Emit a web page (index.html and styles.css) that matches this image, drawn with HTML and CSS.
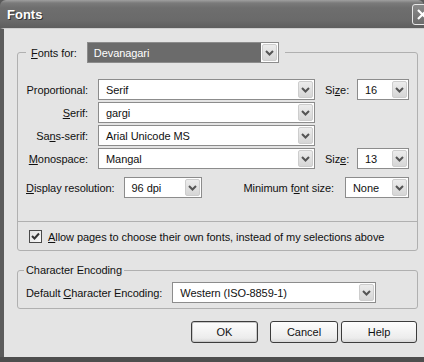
FILE: index.html
```html
<!DOCTYPE html>
<html lang="en">
<head>
    <meta charset="UTF-8">
    <title>Fonts</title>
    <link rel="stylesheet" href="styles.css">
</head>
<body>
    <div class="window">
        <div class="titlebar">
            <span class="title">Fonts</span>
            <span class="close">
                <svg width="13" height="13" viewBox="0 0 13 13"><path d="M2 2 L11 11 M11 2 L2 11" stroke="#fff" stroke-width="2.2" fill="none"/></svg>
            </span>
        </div>

        <div class="client">
            <fieldset class="group group-fonts">
                <legend class="legend-combo">
                    <span class="label"><u>F</u>onts for:</span>
                    <div class="combo combo-lang">
                        <span class="combo-value selected">Devanagari</span>
                        <span class="arrow"><svg width="9" height="6" viewBox="0 0 9 6"><path d="M1 1 L4.5 4.5 L8 1" stroke="#555" stroke-width="2" fill="none"/></svg></span>
                    </div>
                </legend>

                <div class="font-grid">
                    <span class="label right">Proportional:</span>
                    <div class="combo">
                        <span class="combo-value">Serif</span>
                        <span class="arrow"><svg width="9" height="6" viewBox="0 0 9 6"><path d="M1 1 L4.5 4.5 L8 1" stroke="#555" stroke-width="2" fill="none"/></svg></span>
                    </div>
                    <span class="label">Si<u>z</u>e:</span>
                    <div class="combo">
                        <span class="combo-value">16</span>
                        <span class="arrow"><svg width="9" height="6" viewBox="0 0 9 6"><path d="M1 1 L4.5 4.5 L8 1" stroke="#555" stroke-width="2" fill="none"/></svg></span>
                    </div>

                    <span class="label right"><u>S</u>erif:</span>
                    <div class="combo">
                        <span class="combo-value">gargi</span>
                        <span class="arrow"><svg width="9" height="6" viewBox="0 0 9 6"><path d="M1 1 L4.5 4.5 L8 1" stroke="#555" stroke-width="2" fill="none"/></svg></span>
                    </div>
                    <span></span>
                    <span></span>

                    <span class="label right">Sa<u>n</u>s-serif:</span>
                    <div class="combo">
                        <span class="combo-value">Arial Unicode MS</span>
                        <span class="arrow"><svg width="9" height="6" viewBox="0 0 9 6"><path d="M1 1 L4.5 4.5 L8 1" stroke="#555" stroke-width="2" fill="none"/></svg></span>
                    </div>
                    <span></span>
                    <span></span>

                    <span class="label right"><u>M</u>onospace:</span>
                    <div class="combo">
                        <span class="combo-value">Mangal</span>
                        <span class="arrow"><svg width="9" height="6" viewBox="0 0 9 6"><path d="M1 1 L4.5 4.5 L8 1" stroke="#555" stroke-width="2" fill="none"/></svg></span>
                    </div>
                    <span class="label">Siz<u>e</u>:</span>
                    <div class="combo">
                        <span class="combo-value">13</span>
                        <span class="arrow"><svg width="9" height="6" viewBox="0 0 9 6"><path d="M1 1 L4.5 4.5 L8 1" stroke="#555" stroke-width="2" fill="none"/></svg></span>
                    </div>
                </div>

                <div class="res-row">
                    <span class="label"><u>D</u>isplay resolution:</span>
                    <div class="combo combo-res">
                        <span class="combo-value">96 dpi</span>
                        <span class="arrow"><svg width="9" height="6" viewBox="0 0 9 6"><path d="M1 1 L4.5 4.5 L8 1" stroke="#555" stroke-width="2" fill="none"/></svg></span>
                    </div>
                    <span class="label min-label">Minimum f<u>o</u>nt size:</span>
                    <div class="combo combo-min">
                        <span class="combo-value">None</span>
                        <span class="arrow"><svg width="9" height="6" viewBox="0 0 9 6"><path d="M1 1 L4.5 4.5 L8 1" stroke="#555" stroke-width="2" fill="none"/></svg></span>
                    </div>
                </div>

                <div class="separator"></div>

                <div class="check-row">
                    <span class="checkbox">
                        <svg width="11" height="11" viewBox="0 0 11 11"><path d="M2 5 L4.5 7.5 L9 2.5" stroke="#333" stroke-width="2" fill="none"/></svg>
                    </span>
                    <span class="label"><u>A</u>llow pages to choose their own fonts, instead of my selections above</span>
                </div>
            </fieldset>

            <fieldset class="group group-enc">
                <legend class="legend-text">Character Encoding</legend>
                <div class="enc-row">
                    <span class="label">Default <u>C</u>haracter Encoding:</span>
                    <div class="combo combo-enc">
                        <span class="combo-value">Western (ISO-8859-1)</span>
                        <span class="arrow"><svg width="9" height="6" viewBox="0 0 9 6"><path d="M1 1 L4.5 4.5 L8 1" stroke="#555" stroke-width="2" fill="none"/></svg></span>
                    </div>
                </div>
            </fieldset>

            <div class="buttons">
                <button class="btn btn-ok">OK</button>
                <button class="btn btn-cancel">Cancel</button>
                <button class="btn btn-help">Help</button>
            </div>
        </div>
    </div>
</body>
</html>
```

FILE: styles.css
```css
html, body {
    margin: 0;
    padding: 0;
    overflow: hidden;
}
body {
    width: 424px;
    height: 362px;
    background: #5a5a5a;
    font-family: 'Liberation Sans', Arial, sans-serif;
    font-size: 11px;
    letter-spacing: -0.07px;
    color: #111;
}
.window {
    width: 424px;
    height: 362px;
    display: flex;
    flex-direction: column;
    box-sizing: border-box;
    border-bottom: 5px solid #4e4e4e;
    overflow: hidden;
}
.titlebar {
    height: 28px;
    flex: none;
    display: flex;
    align-items: center;
    justify-content: space-between;
    background: linear-gradient(#a0a0a0 0, #7a7a7a 3px, #6e6e6e 8px, #6a6a6a 20px, #5e5e5e 28px);
    border-radius: 6px 6px 0 0;
}
.title {
    margin-left: 7px;
    color: #fff;
    font-size: 13px;
    font-weight: bold;
    letter-spacing: 0;
    text-shadow: 1px 1px #333;
}
.close {
    width: 21px;
    height: 21px;
    margin-right: -9px;
    margin-top: 1px;
    box-sizing: border-box;
    border: 1px solid #e8e8e8;
    border-radius: 3px;
    background: linear-gradient(#8a8a8a, #6c6c6c);
    display: flex;
    align-items: center;
    justify-content: center;
}
.client {
    flex: 1;
    background: #e4e4e4;
    border-left: 4px solid #5c5c5c;
    border-top: 1px solid #cfcfcf;
    padding: 13px 6px 0 13px;
}
.group {
    margin: 0;
    border: 1px solid #b0b0b0;
    border-radius: 3px;
    padding: 0 8px;
}
.group-fonts {
    padding-top: 16px;
    padding-bottom: 7px;
}
.group-enc {
    margin-top: 12px;
    padding-top: 5px;
    padding-bottom: 5px;
}
.legend-combo {
    display: flex;
    align-items: center;
    padding: 0 6px 0 5px;
}
.legend-combo .label {
    margin-right: 10px;
}
.legend-text {
    margin-left: -2px;
    padding: 0 2px;
    line-height: 14px;
}
.label {
    white-space: nowrap;
}
.label.right {
    justify-self: end;
}
.combo {
    height: 21px;
    box-sizing: border-box;
    border: 1px solid #8c8c8c;
    background: #fff;
    display: flex;
    align-items: center;
}
.combo-value {
    flex: 1;
    padding-left: 7px;
    white-space: nowrap;
    overflow: hidden;
}
.combo-value.selected {
    align-self: stretch;
    display: flex;
    align-items: center;
    padding-left: 6px;
    background: #6b6b6b;
    color: #fff;
}
.arrow {
    width: 15px;
    height: 17px;
    margin: 0 1px;
    box-sizing: border-box;
    border: 1px solid #cdcdcd;
    border-radius: 2px;
    background: linear-gradient(#ececec, #d6d6d6);
    display: flex;
    align-items: center;
    justify-content: center;
}
.combo-lang {
    width: 192px;
}
.font-grid {
    display: grid;
    grid-template-columns: 62px 217px 22px 52px;
    grid-auto-rows: 21px;
    column-gap: 10px;
    row-gap: 2px;
    align-items: center;
}
.res-row {
    display: flex;
    align-items: center;
    margin-top: 8px;
}
.combo-res {
    width: 78px;
    margin-left: 9px;
}
.min-label {
    margin-left: auto;
}
.combo-min {
    width: 64px;
    margin-left: 11px;
}
.separator {
    height: 1px;
    background: #b0b0b0;
    margin: 23px -8px 0;
}
.check-row {
    display: flex;
    align-items: center;
    margin-top: 8px;
}
.checkbox {
    width: 13px;
    height: 13px;
    margin-left: 3px;
    margin-right: 6px;
    box-sizing: border-box;
    border: 1px solid #4a4a4a;
    background: linear-gradient(135deg, #e0e0e0, #fafafa);
    display: flex;
    align-items: center;
    justify-content: center;
}
.enc-row {
    display: flex;
    align-items: center;
}
.combo-enc {
    width: 204px;
    margin-left: 10px;
}
.buttons {
    display: flex;
    justify-content: flex-end;
    margin-top: 12px;
    padding-right: 1px;
}
.btn {
    height: 22px;
    box-sizing: border-box;
    border: 1px solid #3c3c3c;
    border-radius: 3px;
    background: linear-gradient(#fdfdfd, #ececec 80%, #d8d8d8);
    font-family: 'Liberation Sans', Arial, sans-serif;
    font-size: 11px;
    color: #111;
    padding: 0;
}
.btn-ok {
    width: 67px;
    box-shadow: inset 0 0 0 1px #c8c8c8;
}
.btn-cancel {
    width: 68px;
    margin-left: 12px;
}
.btn-help {
    width: 76px;
    margin-left: 3px;
}
```
